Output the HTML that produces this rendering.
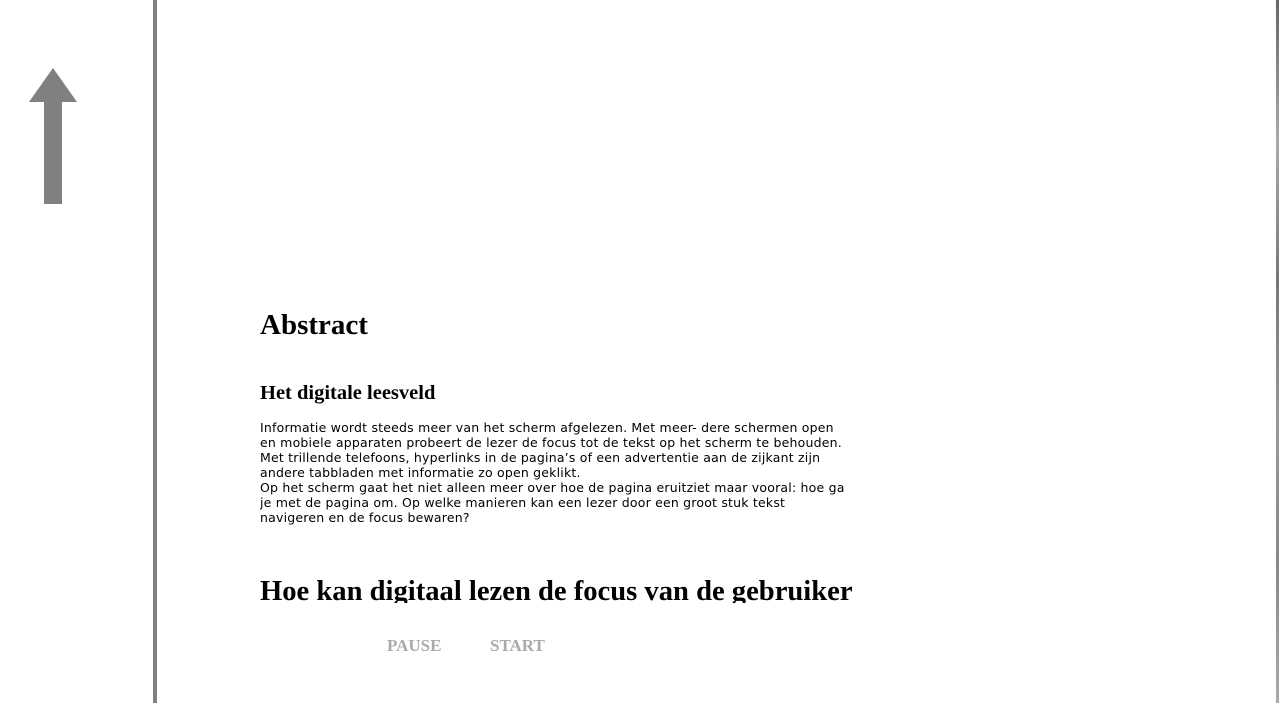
<!DOCTYPE html>
<html><head><meta charset="utf-8"><style>
html,body{margin:0;padding:0;width:1279px;height:703px;overflow:hidden;background:#fff;}
.right{position:absolute;left:1276px;top:0;width:3px;height:703px;background:linear-gradient(#666,#aaa 20%,#777 40%,#999 60%,#888 80%,#aaa);}
.vline{position:absolute;left:153px;top:0;width:4px;height:703px;background:#808080;}
.content{position:absolute;left:260px;top:0;width:620px;height:603px;overflow:hidden;}
h1,h2{font-family:"Liberation Serif",serif;font-weight:bold;margin:0;position:absolute;left:0;white-space:nowrap;color:#000;}
p{font-family:"DejaVu Sans",Verdana,sans-serif;font-size:12.5px;line-height:15px;margin:0;position:absolute;left:0;top:420px;white-space:nowrap;letter-spacing:0.2px;color:#000;}
.btn{position:absolute;top:636px;font-family:"Liberation Serif",serif;font-weight:bold;font-size:17px;color:#aaa;}
</style></head><body>
<div class="right"></div>
<svg style="position:absolute;left:29px;top:68px" width="48" height="136"><polygon points="24,0 48,34 33,34 33,136 15,136 15,34 0,34" fill="#808080"/></svg>
<div class="vline"></div>
<div class="content">
<h1 style="top:309px;font-size:29px">Abstract</h1>
<h2 style="top:382px;font-size:20.5px">Het digitale leesveld</h2>
<p>Informatie wordt steeds meer van het scherm afgelezen. Met meer- dere schermen open<br>en mobiele apparaten probeert de lezer de focus tot de tekst op het scherm te behouden.<br>Met trillende telefoons, hyperlinks in de pagina’s of een advertentie aan de zijkant zijn<br>andere tabbladen met informatie zo open geklikt.<br>Op het scherm gaat het niet alleen meer over hoe de pagina eruitziet maar vooral: hoe ga<br>je met de pagina om. Op welke manieren kan een lezer door een groot stuk tekst<br>navigeren en de focus bewaren?</p>
<h1 style="top:576px;font-size:28.6px">Hoe kan digitaal lezen de focus van de gebruiker</h1>
</div>
<div class="btn" style="left:387px">PAUSE</div>
<div class="btn" style="left:490px">START</div>
</body></html>
